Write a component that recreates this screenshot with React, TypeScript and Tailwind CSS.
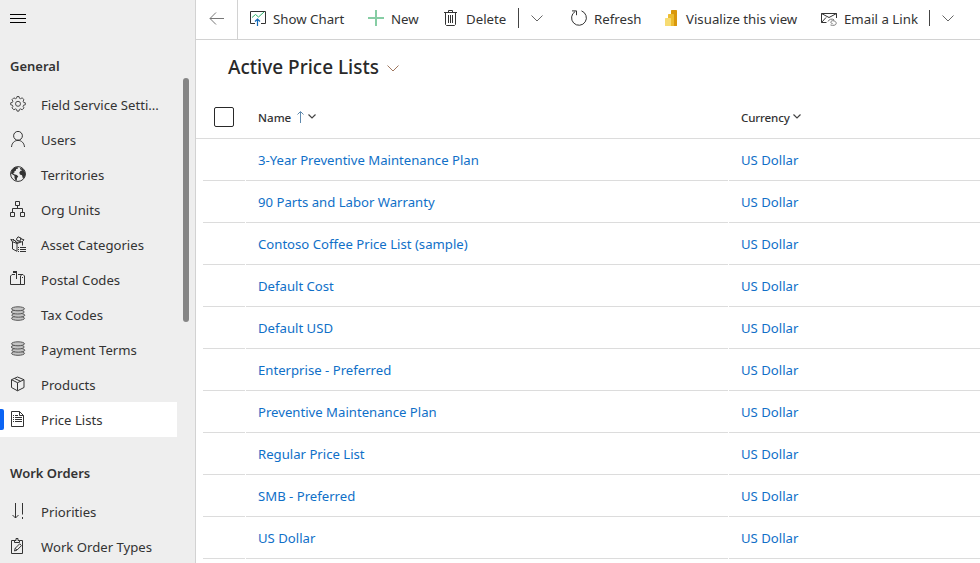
import React from 'react';

type IconProps = { children: React.ReactNode; className?: string };

function Icon({ children, className = 'text-[#333333]' }: IconProps) {
  return (
    <svg
      viewBox="0 0 16 16"
      className={`w-4 h-4 shrink-0 ${className}`}
      fill="none"
      stroke="currentColor"
      strokeWidth="1"
    >
      {children}
    </svg>
  );
}

const GearIcon = () => (
  <Icon className="text-[#4a4a4a]">
    <path d="M6.600 2.200 7 .5h2l.4 1.700 1.200.5 1.500-.9 1.900 1.900-.9 1.500.5 1.200 1.700.4v2l-1.700.4-.5 1.200.9 1.500-1.900 1.900-1.500-.9-1.200.5-.4 1.700H7l-.4-1.700-1.200-.5-1.500.9L2 11.900l.9-1.500-.5-1.200L.7 8.800v-2l1.700-.4.5-1.200L2 3.700l1.900-1.900 1.500.9z" />
    <circle cx="8" cy="7.800" r="2.500" />
  </Icon>
);

const UserIcon = () => (
  <Icon>
    <circle cx="8" cy="4.800" r="4.400" />
    <path d="M1.500 16c.3-4 3-6.600 6.500-6.600s6.200 2.600 6.500 6.600" />
  </Icon>
);

const GlobeIcon = () => (
  <Icon>
    <circle cx="8" cy="8" r="7.400" />
    <path
      d="M1 7.500C1 4.500 3 1.800 6 1l2.300.5-.6 1.200-1.500.4-.4 1.600-1.600.8.300 1.300-1.500.3 1.100 1.100 2.700.7 1.500 1.500-1.300 1.700-.2 2.400-1.100.3L4.500 12V9.800z"
      fill="currentColor"
      stroke="none"
    />
    <path
      d="m10 2 2.500.5L15 6l.6 2.500-1.200 3-1.600.8-.8-3-2.100-.7-.6-2.200 1.300-1.700 1.800-.5L10 3.300z"
      fill="currentColor"
      stroke="none"
    />
  </Icon>
);

const OrgIcon = () => (
  <Icon>
    <path d="M5.500.5h4v4h-4zM.5 11.500h4v4h-4zM10.500 11.500h4v4h-4zM7.500 4.500v3M2.500 11.500v-4h10v4" />
  </Icon>
);

const AssetIcon = () => (
  <Icon>
    <path d="m2 5.500 5 2v7.800L2.500 13V6M7 7.500l5.500-2v4M2 5.500.8 3.300 5.500 4.800 7 7.500M12.500 5.500 14 3.800 10 2.500M6.500 3 8 .8l3.200 1.400-1.400 3-3-1zM3 3l3.500 3.500L11 5.500" />
    <path d="M8 11.500h1M10 11.500h6M8 13.500h1M10 13.500h6M8 15.500h1M10 15.500h6" />
  </Icon>
);

const MailboxIcon = () => (
  <Icon>
    <path d="M5 3.500H2L.5 5v8.500h14V5L13 3.500H8M10.500 13V5L12 3.500M6.500 8V1M12 6.500h1" />
    <path d="M3 1h4" strokeWidth="2" />
  </Icon>
);

const CoinsIcon = () => (
  <Icon className="text-[#555555]">
    <g fill="#c4c4c4">
      <ellipse cx="8" cy="12.300" rx="6.500" ry="2" />
      <ellipse cx="8.300" cy="9.200" rx="6.500" ry="2" />
      <ellipse cx="7.700" cy="6" rx="6.500" ry="2" />
      <ellipse cx="8" cy="2.800" rx="6.500" ry="2" />
    </g>
  </Icon>
);

const BoxIcon = () => (
  <Icon>
    <path d="M7.500 1 14 3.700v7.800l-6.500 3.300L1.500 11.500V3.700zM1.500 3.700l6 3 6.500-3M7.500 6.700v8M4.500 2.500l6 2.700" />
  </Icon>
);

const ListIcon = () => (
  <Icon>
    <path d="M1.500.5h8l4 4v11h-12zM9.500.5v4h4M3 4.500h1M5 4.500h3M3 6.500h1M5 6.500h7M3 8.500h1M5 8.500h7M3 10.500h1M5 10.500h7" />
  </Icon>
);

const PriorityIcon = () => (
  <Icon>
    <path d="M5.500 0v15M2.500 12l3 3 3-3M12.500 0v11.500M12.500 14v2" />
  </Icon>
);

const ClipboardIcon = () => (
  <Icon>
    <path d="M5 2.500H1.500v13h11v-13H9.500M4.500 4.500v-2h1.500v-2h2v2h1.500v2z" />
    <path d="m4.500 13 .7-2.700 4.500-4.500 1.800 1.800-4.500 4.500zM5.200 10.300l1.800 1.800" />
  </Icon>
);

const ChartIcon = () => (
  <Icon>
    <path d="M5 13.500H.5v-12h15v12H11" />
    <path d="m2 7.500 3.500-3 3 2.500 5.500-5" stroke="#2fb36b" />
    <path d="M7.500 16V9M5 11.500 7.500 9l2.500 2.500" stroke="#1068b8" strokeWidth="1.200" />
  </Icon>
);

const PlusIcon = () => (
  <Icon className="text-[#86cda4]">
    <path d="M8 0v16M0 8h16" strokeWidth="2" />
  </Icon>
);

const TrashIcon = () => (
  <Icon>
    <path d="M1 2.500h13M5.500 2.500v-2h4v2M2.500 2.500v12l1 1h8l1-1v-12M5.500 5v8M7.500 5v8M9.500 5v8" />
  </Icon>
);

const RefreshIcon = () => (
  <Icon>
    <path d="M10.500.9A7.400 7.400 0 1 1 4.200 1.500M1 .9h4.500v4.300" />
  </Icon>
);

const PowerBiIcon = () => (
  <Icon>
    <g stroke="none">
      <rect x="8" y="0" width="6" height="16" rx=".6" fill="#d9980c" />
      <rect x="5" y="4" width="6" height="12" rx=".6" fill="#edbd32" />
      <rect x="2" y="8" width="6" height="8" rx=".6" fill="#f7dc73" />
    </g>
  </Icon>
);

const EmailIcon = () => (
  <Icon>
    <path d="M5.500 12.500h-5v-9h15V8M.5 3.500l7.500 4 7.500-4M.5 12.500 5 7.500" />
    <path
      d="M11.500 13.500c-2 .2-2.300-2.500 0-2.800 2.500-.2 3.800 1.400 3.700 2.800-.3 1.700-2.500 2.300-5.700 1.500M7 11.500c1-2.500 4-3 6-1.700"
      stroke="#777777"
    />
  </Icon>
);

function Chevron({ className = 'text-[#666666]' }: { className?: string }) {
  return (
    <svg viewBox="0 0 12 7" className={`w-3 shrink-0 ${className}`} fill="none" stroke="currentColor">
      <path d="m.5.5 5.500 5.500L11.500.5" />
    </svg>
  );
}

function SmallChevron() {
  return (
    <svg viewBox="0 0 8 5" className="w-2 h-[5px] shrink-0" fill="none" stroke="#444444" strokeWidth="1.200">
      <path d="m.5.5 3.500 3.500L7.500.5" />
    </svg>
  );
}

const general = [
  { label: 'Field Service Setti...', icon: GearIcon },
  { label: 'Users', icon: UserIcon },
  { label: 'Territories', icon: GlobeIcon },
  { label: 'Org Units', icon: OrgIcon },
  { label: 'Asset Categories', icon: AssetIcon },
  { label: 'Postal Codes', icon: MailboxIcon },
  { label: 'Tax Codes', icon: CoinsIcon },
  { label: 'Payment Terms', icon: CoinsIcon },
  { label: 'Products', icon: BoxIcon },
  { label: 'Price Lists', icon: ListIcon, active: true },
];

const workOrders = [
  { label: 'Priorities', icon: PriorityIcon },
  { label: 'Work Order Types', icon: ClipboardIcon },
];

const priceLists = [
  '3-Year Preventive Maintenance Plan',
  '90 Parts and Labor Warranty',
  'Contoso Coffee Price List (sample)',
  'Default Cost',
  'Default USD',
  'Enterprise - Preferred',
  'Preventive Maintenance Plan',
  'Regular Price List',
  'SMB - Preferred',
  'US Dollar',
];

type NavItem = { label: string; icon: React.FC; active?: boolean };

function NavGroup({ title, items }: { title: string; items: NavItem[] }) {
  return (
    <div className="w-[177px]">
      <h2 className="h-[57px] pt-[26px] pl-2.5 text-[13px] leading-5 font-semibold text-[#333333]">{title}</h2>
      {items.map(({ label, icon: ItemIcon, active }) => (
        <div key={label} className={`flex items-center h-[35px] ${active ? 'bg-white' : ''}`}>
          <div className={`w-1 h-[21px] rounded-r-xs mr-1.5 ${active ? 'bg-[#0b64f4]' : ''}`} />
          <div className="-mt-px">
            <ItemIcon />
          </div>
          <span className="ml-[15px] pt-px whitespace-nowrap">{label}</span>
        </div>
      ))}
    </div>
  );
}

function Command({ label, icon: CommandIcon, className }: { label: string; icon: React.FC; className: string }) {
  return (
    <button className={`flex items-center gap-[7px] shrink-0 whitespace-nowrap ${className}`}>
      <CommandIcon />
      <span className="pt-0.5">{label}</span>
    </button>
  );
}

export default function App() {
  return (
    <div className="flex w-[980px] h-[563px] overflow-hidden bg-white font-['Noto_Sans','Open_Sans',sans-serif] text-[13.150px] leading-5 text-[#333333]">
      <aside className="flex w-[196px] shrink-0 bg-[#eeeeee] border-r border-[#d2d2d2]">
        <div className="w-[183px] shrink-0">
          <div className="h-[30px] pt-3.5 pl-2.5">
            <div className="w-4 h-[9px] border-y border-black pt-[3px]">
              <div className="h-px bg-black" />
            </div>
          </div>
          <NavGroup title="General" items={general} />
          <NavGroup title="Work Orders" items={workOrders} />
        </div>
        <div className="w-1.5 h-[244px] mt-[78px] rounded-full bg-[#858585]" />
      </aside>

      <main className="flex-1 min-w-0">
        <div className="flex items-center h-10 pb-[3px] border-b border-[#d2d2d2] text-[13.250px]">
          <button className="flex items-center justify-center w-[42px] h-10 -mb-[3px] shrink-0 border-r border-[#d2d2d2]">
            <Icon className="text-[#777777]">
              <path d="M1 6.500h14M7 .5l-6 6 6 6" />
            </Icon>
          </button>
          <Command label="Show Chart" icon={ChartIcon} className="ml-3 w-[118px]" />
          <Command label="New" icon={PlusIcon} className="w-[75px]" />
          <Command label="Delete" icon={TrashIcon} className="w-[75px]" />
          <div className="w-px h-5 shrink-0 bg-[#444444]" />
          <Chevron className="ml-3 mr-7 text-[#666666]" />
          <Command label="Refresh" icon={RefreshIcon} className="w-[92px]" />
          <Command label="Visualize this view" icon={PowerBiIcon} className="w-[158px]" />
          <Command label="Email a Link" icon={EmailIcon} className="w-[108px]" />
          <div className="w-px h-4 shrink-0 bg-[#444444]" />
          <Chevron className="ml-3 text-[#666666]" />
        </div>

        <div className="flex items-center h-[54px] pl-8 gap-2">
          <h1 className="text-[19px] font-medium text-[#292929] whitespace-nowrap">Active Price Lists</h1>
          <Chevron className="text-[#a0775f] mt-0.5" />
        </div>

        <div className="flex items-center h-[45px] pt-px border-b border-[#dcdcdc] text-[11.600px] font-medium">
          <div className="w-5 h-5 ml-[18px] shrink-0 rounded-xs border border-[#292929]" />
          <div className="flex items-center ml-6 w-[483px]">
            <span className="w-[33px] pt-[3px]">Name</span>
            <svg viewBox="0 0 8 12" className="w-2 h-3 ml-[5px] mr-1" fill="none" stroke="#5f89ad">
              <path d="M4.500 12V1M1.500 3.500l3-3 3 3" />
            </svg>
            <SmallChevron />
          </div>
          <span className="w-[49px] mr-[3px] pt-[3px] tracking-[-0.15px]">Currency</span>
          <SmallChevron />
        </div>

        {priceLists.map((name) => (
          <div key={name} className="flex h-[42px] pl-[7px] gap-px leading-[42px] text-[#1070c8] whitespace-nowrap">
            <div className="w-[42px] border-b border-[#dcdcdc]" />
            <div className="w-[482px] pl-3 border-b border-[#dcdcdc]">{name}</div>
            <div className="flex-1 pl-3 border-b border-[#dcdcdc]">US Dollar</div>
          </div>
        ))}
      </main>
    </div>
  );
}
